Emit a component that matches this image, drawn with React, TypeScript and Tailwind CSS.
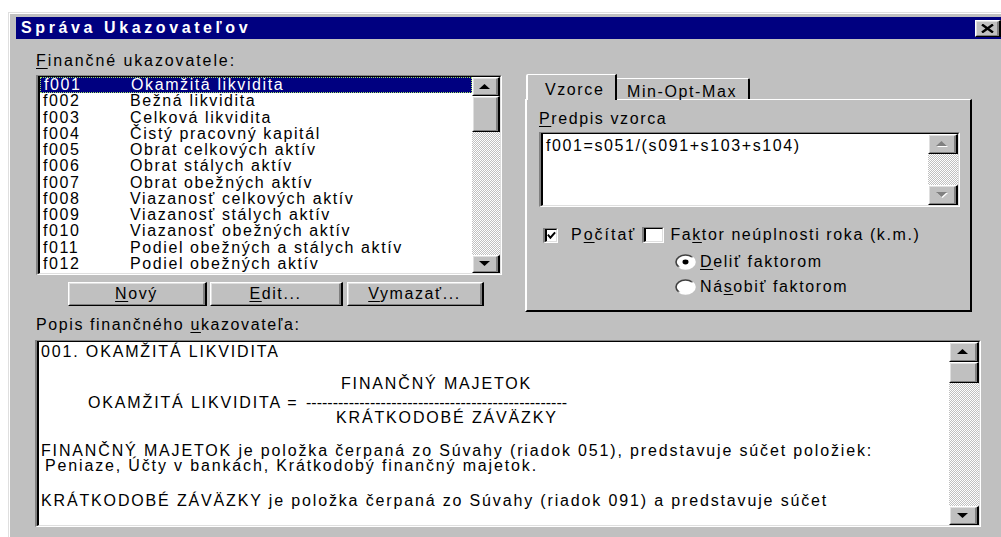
import React from "react";

type BoxProps = { children?: React.ReactNode; className?: string };

// Raised 3D bevel used by push buttons, scroll arrows and thumbs
function Raised({ children, className = "" }: BoxProps) {
  return (
    <div
      className={`border-t border-l border-r-2 border-b border-t-white border-l-white border-r-black border-b-black bg-[#c0c0c0] ${className}`}
    >
      <div className="flex h-full w-full items-center justify-center border-t border-l border-r-2 border-b border-t-[#dfdfdf] border-l-[#dfdfdf] border-r-[#808080] border-b-[#808080]">
        {children}
      </div>
    </div>
  );
}

// Sunken white field (list boxes, edit boxes)
function Sunken({ children, className = "" }: BoxProps) {
  return (
    <div
      className={`border-t border-l-2 border-r border-b border-t-[#808080] border-l-[#808080] border-r-white border-b-white ${className}`}
    >
      <div className="flex h-full w-full overflow-hidden border-t border-l-2 border-r border-b border-t-black border-l-black border-r-[#dfdfdf] border-b-[#dfdfdf] bg-white">
        {children}
      </div>
    </div>
  );
}

function Arrow({ down = false, disabled = false }: { down?: boolean; disabled?: boolean }) {
  const d = down ? "M0 0 L11 0 L5.5 5 Z" : "M5.5 0 L11 5 L0 5 Z";
  return (
    <svg width="12" height="6" viewBox="0 0 12 6">
      {disabled && <path d={d} fill="#ffffff" transform="translate(1 1)" />}
      <path d={d} fill={disabled ? "#808080" : "#000000"} />
    </svg>
  );
}

const dither =
  "bg-[image:repeating-conic-gradient(#c0c0c0_0%_25%,#ffffff_0%_50%)] bg-[length:2px_2px]";

function U({ children }: { children: React.ReactNode }) {
  return <span className="underline underline-offset-[2px] decoration-1">{children}</span>;
}

const rows: [string, string][] = [
  ["f001", "Okamžitá likvidita"],
  ["f002", "Bežná likvidita"],
  ["f003", "Celková likvidita"],
  ["f004", "Čistý pracovný kapitál"],
  ["f005", "Obrat celkových aktív"],
  ["f006", "Obrat stálych aktív"],
  ["f007", "Obrat obežných aktív"],
  ["f008", "Viazanosť celkových aktív"],
  ["f009", "Viazanosť stálych aktív"],
  ["f010", "Viazanosť obežných aktív"],
  ["f011", "Podiel obežných a stálych aktív"],
  ["f012", "Podiel obežných aktív"],
];

function CheckBox({ checked = false, className = "" }: { checked?: boolean; className?: string }) {
  return (
    <div
      className={`border-t border-l-2 border-r border-b border-t-[#808080] border-l-[#808080] border-r-white border-b-white ${className}`}
    >
      <div className="flex h-full w-full items-center justify-center border-t border-l-2 border-r border-b border-t-black border-l-black border-r-[#dfdfdf] border-b-[#dfdfdf] bg-white">
        {checked && (
          <svg width="10" height="9" viewBox="0 0 10 9">
            <path d="M1 3.5 L3.8 7 L9 1" stroke="#000" strokeWidth="2.2" fill="none" />
          </svg>
        )}
      </div>
    </div>
  );
}

function Radio({ on = false, id }: { on?: boolean; id: string }) {
  return (
    <svg width="21" height="16" viewBox="0 0 21 16" className="shrink-0">
      <defs>
        <linearGradient id={id} x1="0" y1="0" x2="1" y2="1">
          <stop offset="0.45" stopColor="#404040" />
          <stop offset="0.55" stopColor="#ffffff" />
        </linearGradient>
      </defs>
      <ellipse cx="10.5" cy="8" rx="9.5" ry="7" fill="#ffffff" stroke={`url(#${id})`} strokeWidth="1.6" />
      {on && <ellipse cx="10.5" cy="8" rx="3" ry="2.4" fill="#000000" />}
    </svg>
  );
}

export default function App() {
  return (
    <div className="h-[537px] w-[1001px] overflow-hidden bg-white font-['Liberation_Sans',Arial,sans-serif] text-[16px] leading-[16px] tracking-[1.6px] text-black">
      {/* dialog window frame */}
      <div className="ml-[8px] mt-[12px] h-[540px] w-[1010px] border-t border-l border-[#dfdfdf] bg-[#c0c0c0]">
        <div className="h-full border-t border-l border-white pl-[6px] pt-[3px]">
          {/* title bar */}
          <div className="flex h-[22px] w-[989px] items-center bg-[#000080] pl-[5px]">
            <span className="flex-1 text-[16px] font-bold leading-[22px] tracking-[3.6px] text-white">
              Správa Ukazovateľov
            </span>
            <Raised className="mr-[4px] h-[17px] w-[26px]">
              <svg width="13" height="9" viewBox="0 0 13 9">
                <path d="M1 0.5 L12 8.5 M12 0.5 L1 8.5" stroke="#000" strokeWidth="2.4" />
              </svg>
            </Raised>
          </div>

          <div className="pl-[20px]">
            <div className="flex items-start">
              {/* indicator list */}
              <div className="w-[466px]">
                <div className="mt-[14px] h-[16px] tracking-[1.9px]">
                  <U>F</U>inančné ukazovatele:
                </div>
                <Sunken className="mt-[6px] h-[200px] w-[466px]">
                  <div className="flex-1">
                    {rows.map(([code, name], i) => (
                      <div
                        key={code}
                        className={`flex h-[16.25px] items-center pl-[3px] ${
                          i === 0
                            ? "border border-dotted border-[#9fe060] bg-[#000080] pl-[2px] text-white"
                            : ""
                        }`}
                      >
                        <span className="w-[87px] shrink-0">{code}</span>
                        <span className="whitespace-nowrap">{name}</span>
                      </div>
                    ))}
                  </div>
                  <div className="flex w-[28px] flex-col">
                    <Raised className="h-[19px]">
                      <Arrow />
                    </Raised>
                    <Raised className="h-[36px]" />
                    <div className={`flex-1 ${dither}`} />
                    <Raised className="h-[18px]">
                      <Arrow down />
                    </Raised>
                  </div>
                </Sunken>
                <div className="mt-[7px] flex pl-[32px]">
                  <Raised className="h-[24px] w-[139px]">
                    <span>
                      <U>N</U>ový
                    </span>
                  </Raised>
                  <Raised className="ml-[3px] h-[24px] w-[133px]">
                    <span>
                      <U>E</U>dit...
                    </span>
                  </Raised>
                  <Raised className="ml-[4px] h-[24px] w-[137px]">
                    <span>
                      <U>V</U>ymazať...
                    </span>
                  </Raised>
                </div>
              </div>

              {/* formula tab page */}
              <div className="ml-[23px] mt-[35px] w-[447px]">
                <div className="flex h-[25px] items-end pl-[1px]">
                  <div className="relative z-10 -mb-[1px] h-[26px] w-[91px] rounded-tl-[2px] border-t border-l-2 border-r-2 border-t-white border-l-white border-r-black bg-[#c0c0c0] pl-[17px] pt-[7px]">
                    Vzorce
                  </div>
                  <div className="h-[21px] w-[133px] rounded-tr-[2px] border-t border-r-2 border-t-white border-r-black pl-[10px] pt-[5px]">
                    Min-Opt-Max
                  </div>
                </div>
                <div className="h-[213px] border-t border-l-2 border-r-2 border-b-2 border-t-white border-l-white border-r-black border-b-black pl-[12px]">
                  <div className="mt-[11px] h-[16px]">
                    <U>P</U>redpis vzorca
                  </div>
                  <Sunken className="mt-[5px] h-[75px] w-[421px]">
                    <div className="flex-1 pl-[3px] pt-[4px]">f001=s051/(s091+s103+s104)</div>
                    <div className="flex w-[30px] flex-col">
                      <Raised className="h-[20px]">
                        <Arrow disabled />
                      </Raised>
                      <div className={`flex-1 ${dither}`} />
                      <Raised className="h-[20px]">
                        <Arrow down disabled />
                      </Raised>
                    </div>
                  </Sunken>
                  <div className="mt-[20px] flex h-[16px] items-center pl-[4px]">
                    <CheckBox checked className="h-[15px] w-[15px]" />
                    <span className="ml-[13px] tracking-[2px]">
                      P<U>o</U>čítať
                    </span>
                    <CheckBox className="ml-[6px] h-[16px] w-[22px]" />
                    <span className="ml-[6px] whitespace-nowrap">
                      Fa<U>k</U>tor neúplnosti roka (k.m.)
                    </span>
                  </div>
                  <div className="mt-[11px] flex h-[16px] items-center pl-[136px]">
                    <Radio on id="r-delit" />
                    <span className="ml-[4px]">
                      <U>D</U>eliť faktorom
                    </span>
                  </div>
                  <div className="mt-[9px] flex h-[16px] items-center pl-[136px]">
                    <Radio id="r-nasobit" />
                    <span className="ml-[4px]">
                      Ná<U>s</U>obiť faktorom
                    </span>
                  </div>
                </div>
              </div>
            </div>

            {/* description */}
            <div className="mt-[5px] h-[16px]">
              Popis finančného <U>u</U>kazovateľa:
            </div>
            <Sunken className="-ml-[1px] mt-[7px] h-[187px] w-[946px]">
              <div className="flex-1 whitespace-nowrap pl-[2px] pt-[2px] tracking-[1.85px]">
                <div className="h-[16px]">001. OKAMŽITÁ LIKVIDITA</div>
                <div className="h-[16px]" />
                <div className="h-[19px] pl-[300px]">FINANČNÝ MAJETOK</div>
                <div className="flex h-[15px] leading-[15px]">
                  <span className="w-[265px] pl-[47px]">OKAMŽITÁ LIKVIDITA =</span>
                  <span className="tracking-[0px]">-------------------------------------------------</span>
                </div>
                <div className="h-[16px] pl-[295px]">KRÁTKODOBÉ ZÁVÄZKY</div>
                <div className="h-[17px]" />
                <div className="h-[15px]">
                  FINANČNÝ MAJETOK je položka čerpaná zo Súvahy (riadok 051), predstavuje súčet položiek:
                </div>
                <div className="h-[17px] pl-[4px]">Peniaze, Účty v bankách, Krátkodobý finančný majetok.</div>
                <div className="h-[18px]" />
                <div className="h-[16px]">
                  KRÁTKODOBÉ ZÁVÄZKY je položka čerpaná zo Súvahy (riadok 091) a predstavuje súčet
                </div>
              </div>
              <div className="flex w-[30px] flex-col">
                <Raised className="h-[20px]">
                  <Arrow />
                </Raised>
                <Raised className="h-[21px]" />
                <div className={`flex-1 ${dither}`} />
                <Raised className="h-[19px]">
                  <Arrow down />
                </Raised>
              </div>
            </Sunken>
          </div>
        </div>
      </div>
    </div>
  );
}
